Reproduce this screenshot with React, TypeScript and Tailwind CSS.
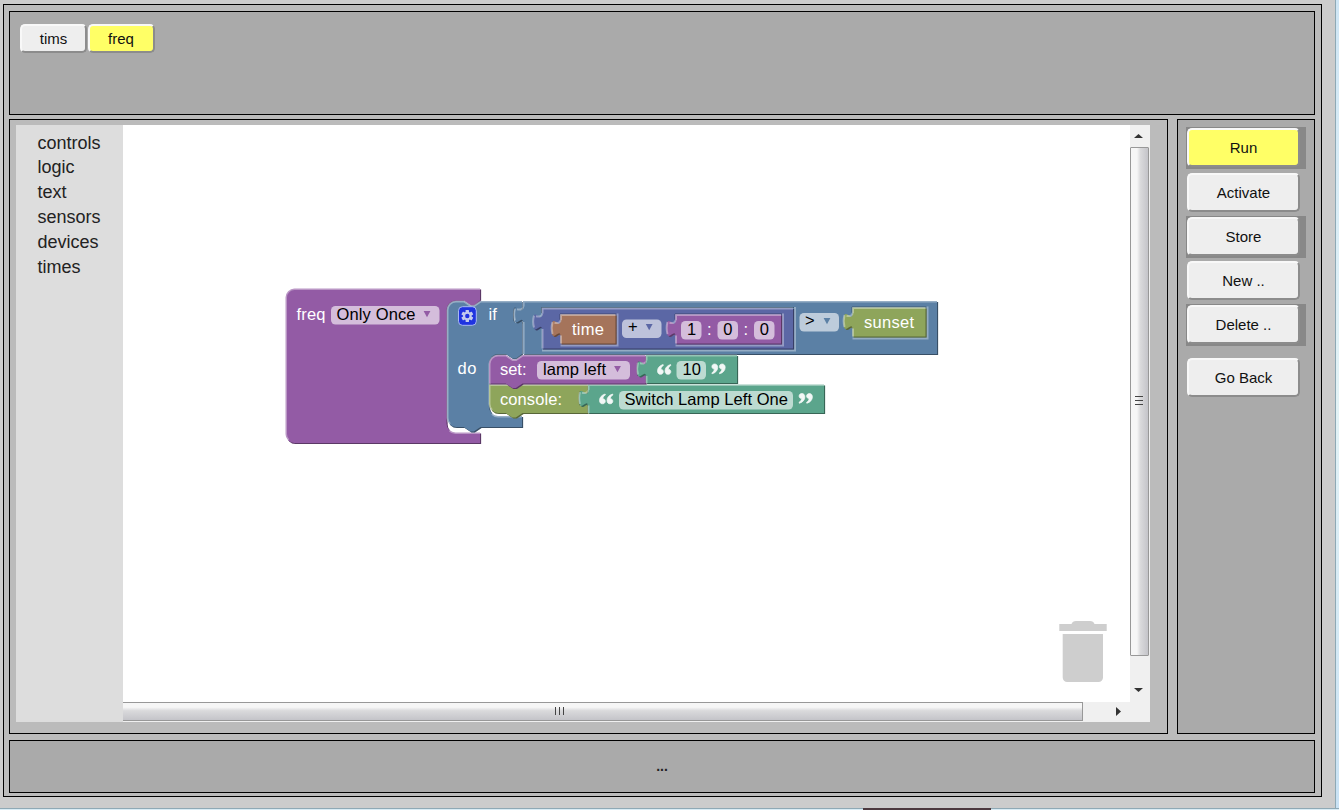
import React from "react";

const PURPLE = "#935ba5";
const BLUE = "#5b80a5";
const INDIGO = "#5b67a5";
const BROWN = "#a5745b";
const OLIVE = "#8ea55b";
const TEAL = "#5ba58c";

const CATEGORIES = ["controls", "logic", "text", "sensors", "devices", "times"];

/* ---------- blocks ---------- */

function Shape({ d, light, color }: { d: string; light: string; color: string }) {
  return (
    <g>
      <path d={d} transform="translate(1.1,1.1)" fill={color} />
      <path d={d} transform="translate(1.1,1.1)" fill="#000" fillOpacity={0.38} />
      <path d={d} fill={color} />
      <path d={light} fill="none" stroke="#fff" strokeOpacity={0.36} strokeWidth={2} />
    </g>
  );
}

/* Output block with a puzzle tab on its left side. */
function ValueBlock({
  x, y, w, h, color, inset = false,
}: { x: number; y: number; w: number; h: number; color: string; inset?: boolean }) {
  const d = `M0,0 H${w} V${h} H0 V22.4 c0,-11.2 -9,9 -9,-8.4 s9,2.8 9,-8.4 Z`;
  const light = `M${w},0.5 H0.5 V5.6 M0.5,${h} V21 M-8,19.6 q-1.7,-6.2 0,-12 M-6,8.2 q5.5,1.4 6.2,-2.6`;
  return (
    <g transform={`translate(${x},${y})`}>
      {inset && (
        <path
          d={`M${w + 2},-1 V${h + 2} H0 M-7,20.8 l6,-1.2`}
          fill="none" stroke="#fff" strokeOpacity={0.35} strokeWidth={2}
        />
      )}
      {inset && (
        <path d={`M${w + 1},-0.5 H-0.5 V5`} fill="none" stroke="#000" strokeOpacity={0.3} />
      )}
      <Shape d={d} light={light} color={color} />
    </g>
  );
}

function Label({ x, y, w, children, fill = "#fff" }: { x: number; y: number; w?: number; children: string; fill?: string }) {
  return (
    <text x={x} y={y} fill={fill} textLength={w} fontSize={16.5}>
      {children}
    </text>
  );
}

function Field({ x, y, w, h = 18.5 }: { x: number; y: number; w: number; h?: number }) {
  return <rect x={x} y={y} width={w} height={h} rx={4.5} fill="#fff" fillOpacity={0.6} />;
}

function Arrow({ x, y, color }: { x: number; y: number; color: string }) {
  return <path d={`M${x - 0.2},${y} h6.8 l-3.4,6.2 z`} fill={color} />;
}

const QUOTE =
  "M5.6,0 C2.2,1 0,3.4 0,6.4 C0,8.6 1.3,9.8 3,9.8 C4.7,9.8 5.8,8.7 5.8,7.2 C5.8,5.7 4.7,4.7 3.3,4.7 C3.4,3.2 4.3,1.8 5.9,0.9 Z";

function Quote({ x, y, close = false }: { x: number; y: number; close?: boolean }) {
  return (
    <g
      transform={close ? `translate(${x + 13.4},${y + 9.8}) rotate(180)` : `translate(${x},${y})`}
      fill="#fff" stroke="#fff" strokeWidth={0.7} strokeLinejoin="round" opacity={0.92}
    >
      <path d={QUOTE} />
      <path d={QUOTE} transform="translate(7.5,0)" />
    </g>
  );
}

function Gear() {
  return (
    <g transform="translate(467.3,316)">
      <rect x={-8.8} y={-9.3} width={17.8} height={18.6} rx={4} fill="#1f33e0" stroke="#a9b9f2" strokeWidth={1} />
      {[0, 60, 120].map((a) => (
        <rect key={a} x={-1.7} y={-6} width={3.4} height={12} rx={0.6} fill="#c3cbee" transform={`rotate(${a})`} />
      ))}
      <circle r={4.3} fill="#c3cbee" />
      <circle r={2.2} fill="#1f33e0" />
    </g>
  );
}

function Workspace() {
  return (
    <svg
      className="block h-[577px] w-[1007px] bg-white"
      viewBox="123 125 1007 577"
      fontFamily="'Liberation Sans', Arial, sans-serif"
    >
      {/* freq */}
      <Shape
        color={PURPLE}
        d="M285.5,297.5 A9,9 0 0 1 294.5,288.5 H480 V300.5 l-6,4.5 h-3.4 l-6.7,-4.5 H455.5 a9,9 0 0 0 -9,9 V423.5 a9,9 0 0 0 9,9 H480 V443 H294.5 A9,9 0 0 1 285.5,434 Z"
        light="M288.5,440 A9,9 0 0 1 286,434 V297.5 A8.5,8.5 0 0 1 294.5,289 H480 M449.5,430.5 a9,9 0 0 0 6,2.5 H480"
      />
      <Label x={296.5} y={320} w={29}>freq</Label>
      <Field x={331} y={306} w={108.5} />
      <Label x={336.5} y={320} w={79} fill="#000">Only Once</Label>
      <Arrow x={423.8} y={311} color={PURPLE} />

      {/* if / do */}
      <Shape
        color={BLUE}
        d="M447,310 A9,9 0 0 1 456,301 H464 l6.7,4.5 h3.4 l6.7,-4.5 H522 V306.6 c0,11.2 -9,-9 -9,8.4 s9,-2.8 9,8.4 V354 l-6,4.5 h-3.4 l-6.7,-4.5 H498 a9,9 0 0 0 -9,9 V407 a9,9 0 0 0 9,9 H522 V427 H480.5 l-6.7,4.5 h-3.4 l-6.7,-4.5 H456 A9,9 0 0 1 447,418 Z"
        light="M450,424 A9,9 0 0 1 447.5,418 V310 A8.5,8.5 0 0 1 456,301.5 H464 l6.7,4.5 h3.4 l6.7,-4.5 H522 M492,414 a9,9 0 0 0 6,2.5 H522 M515.5,321.5 l6,-1.2"
      />
      <Gear />
      <Label x={488.5} y={320}>if</Label>
      <Label x={457.5} y={374} w={19}>do</Label>

      {/* comparison */}
      <ValueBlock x={523} y={301} w={414} h={53} color={BLUE} />
      <path d="M523.4,302 V306.5 M523.4,323.5 V354" stroke="#8ea8c2" strokeWidth={1.6} />
      <ValueBlock x={542} y={308} w={251} h={40.5} color={INDIGO} inset />
      <ValueBlock x={560.5} y={314.5} w={55} h={29} color={BROWN} inset />
      <Label x={572} y={335} w={32}>time</Label>
      <Field x={622} y={319.5} w={39.5} />
      <Label x={628} y={332} fill="#000">+</Label>
      <Arrow x={646} y={324} color={INDIGO} />
      <ValueBlock x={675.5} y={314.5} w={105.5} h={29} color={PURPLE} inset />
      <Field x={681} y={321} w={20.5} />
      <Label x={687} y={335} fill="#000">1</Label>
      <Label x={707} y={335}>:</Label>
      <Field x={717.5} y={321} w={20.5} />
      <Label x={723.2} y={335} fill="#000">0</Label>
      <Label x={743.5} y={335}>:</Label>
      <Field x={754} y={321} w={20.5} />
      <Label x={759.7} y={335} fill="#000">0</Label>
      <Field x={799.5} y={313} w={39.5} />
      <Label x={805} y={326} fill="#000">&gt;</Label>
      <Arrow x={823.8} y={318} color={BLUE} />
      <ValueBlock x={852.5} y={307.5} w={73} h={29} color={OLIVE} inset />
      <Label x={864} y={328} w={50}>sunset</Label>

      {/* console */}
      <Shape
        color={OLIVE}
        d="M489,384.5 H587.5 V390 c0,11.2 -9,-9 -9,8.4 s9,-2.8 9,8.4 V413 H522.5 l-6.7,4.5 h-3.4 l-6.7,-4.5 H498 A9,9 0 0 1 489,404 Z"
        light="M492,410 A9,9 0 0 1 489.5,404 V385 H587.5"
      />
      <Label x={500} y={405} w={62}>console:</Label>
      <ValueBlock x={588} y={384.5} w={236} h={28.5} color={TEAL} />
      <Quote x={599.5} y={394} />
      <Field x={619} y={391} w={174} />
      <Label x={624.5} y={405} w={163.5} fill="#000">Switch Lamp Left One</Label>
      <Quote x={799} y={393.5} close />

      {/* set */}
      <Shape
        color={PURPLE}
        d="M489,364 A9,9 0 0 1 498,355 H506 l6.7,4.5 h3.4 l6.7,-4.5 H645.5 V360.6 c0,11.2 -9,-9 -9,8.4 s9,-2.8 9,8.4 V383.5 H522.5 l-6.7,4.5 h-3.4 l-6.7,-4.5 H489 Z"
        light="M489.5,384 V364 A8.5,8.5 0 0 1 498,355.5 H506 l6.7,4.5 h3.4 l6.7,-4.5 H645.5"
      />
      <Label x={500} y={375} w={26.5}>set:</Label>
      <Field x={537} y={361} w={93} />
      <Label x={543} y={375} w={63} fill="#000">lamp left</Label>
      <Arrow x={614.3} y={366} color={PURPLE} />
      <ValueBlock x={646} y={355} w={91} h={28} color={TEAL} />
      <Quote x={657.5} y={364.5} />
      <Field x={676.5} y={361} w={29.5} />
      <Label x={682.5} y={375} fill="#000">10</Label>
      <Quote x={711.8} y={364} close />

      {/* trash */}
      <path
        fill="#cecece"
        d="M1059.3,624 H1071.5 Q1072.5,621 1076,621 H1090 Q1093.5,621 1094.5,624 H1106.7 V631 H1059.3 Z M1062.7,634 H1103 V677.5 A4.5,4.5 0 0 1 1098.5,682 H1067.2 A4.5,4.5 0 0 1 1062.7,677.5 Z"
      />
    </svg>
  );
}

/* ---------- scrollbars ---------- */

function VerticalScrollbar() {
  return (
    <div className="flex h-[577px] w-5 flex-col bg-[#f0f0f0]">
      <div className="flex h-[22px] items-center justify-center pr-[3px] pb-px">
        <svg className="h-1 w-[9px]" viewBox="0 0 9 4"><path d="M0,4 L4.5,0 L9,4 Z" fill="#333" /></svg>
      </div>
      <div className="flex h-[509px] w-[19px] items-center justify-center rounded-[1px] border border-[#989898] bg-linear-to-r from-[#f6f6f6] from-35% via-[#dadadc] via-55% to-[#c4c4c9] pr-0.5 pb-0.5">
        <div className="flex h-[9px] w-2 flex-col justify-between">
          <i className="h-px bg-[#444]" />
          <i className="h-px bg-[#444]" />
          <i className="h-px bg-[#444]" />
        </div>
      </div>
      <div className="flex grow items-center justify-center pt-[22px] pr-[3px]">
        <svg className="h-1 w-[9px]" viewBox="0 0 9 4"><path d="M0,0 L4.5,4 L9,0 Z" fill="#333" /></svg>
      </div>
    </div>
  );
}

function HorizontalScrollbar() {
  return (
    <div className="flex h-5 bg-[#f0f0f0]">
      <div className="flex h-[19px] w-[960px] items-center border border-l-0 border-[#989898] bg-linear-to-b from-[#f6f6f6] from-25% via-[#dadadc] via-45% to-[#c4c4c9] pb-px pl-[432px]">
        <div className="flex h-2 w-[9px] justify-between">
          <i className="w-px bg-[#444]" />
          <i className="w-px bg-[#444]" />
          <i className="w-px bg-[#444]" />
        </div>
      </div>
      <div className="flex grow items-center pb-0.5 pl-[33px]">
        <svg className="h-[9px] w-[5px]" viewBox="0 0 5 9"><path d="M0,0 L5,4.5 L0,9 Z" fill="#333" /></svg>
      </div>
    </div>
  );
}

/* ---------- buttons ---------- */

const RAISED =
  "rounded-[5px] border-2 border-t-[#f8f8f8] border-l-[#f8f8f8] border-r-[#8c8c8c] border-b-[#8c8c8c] text-[15px] leading-none text-[#111]";

function Tab({ label, active = false }: { label: string; active?: boolean }) {
  return (
    <button className={`${RAISED} h-[29px] w-[67px] ${active ? "bg-[#ffff66]" : "bg-[#eeeeee]"}`}>{label}</button>
  );
}

function SideButton({ label, active = false, shaded = false }: { label: string; active?: boolean; shaded?: boolean }) {
  return (
    <div className={`h-[42px] w-[120px] pt-[1.3px] pl-px ${shaded ? "bg-[#888888]" : ""}`}>
      <button className={`${RAISED} block h-[39px] w-[113px] ${active ? "bg-[#ffff66]" : "bg-[#eeeeee]"}`}>{label}</button>
    </div>
  );
}

export default function App() {
  return (
    <div className="flex h-[810px] w-[1339px] flex-col overflow-hidden bg-[#d9ecf5] font-['Liberation_Sans',Arial,sans-serif]">
      <div className="flex h-[808px]">
        <div className="h-[808px] w-[1336px] border-r border-[#8fa9b5] bg-[#cccccc] pt-1 pl-[3px]">
          <div className="flex h-[793px] w-[1319px] flex-col border border-black bg-[#bbbbbb] pt-1.5 pl-[5px]">
            <header className="flex h-[104px] w-[1306px] gap-[0.5px] border border-black bg-[#aaaaaa] pt-3 pl-[10px]">
              <Tab label="tims" />
              <Tab label="freq" active />
            </header>

            <div className="mt-1 flex h-[615px] gap-[9px]">
              <main className="flex w-[1159px] border border-black pt-[5px] pl-1.5">
                <nav className="h-[597px] w-[107px] bg-[#dddddd] pt-[5.7px] pl-[21.5px] text-[18px] leading-[24.8px] text-[#222]">
                  {CATEGORIES.map((name) => (
                    <div key={name}>{name}</div>
                  ))}
                </nav>
                <div className="flex h-[597px] w-[1027px] flex-col">
                  <div className="flex">
                    <Workspace />
                    <VerticalScrollbar />
                  </div>
                  <HorizontalScrollbar />
                </div>
              </main>

              <aside className="flex w-[138px] flex-col gap-[2.25px] border border-black bg-[#aaaaaa] pt-[7px] pl-2">
                <SideButton label="Run" active shaded />
                <SideButton label="Activate" />
                <SideButton label="Store" shaded />
                <SideButton label="New .." />
                <SideButton label="Delete .." shaded />
                <div className="mt-[8.5px]">
                  <SideButton label="Go Back" />
                </div>
              </aside>
            </div>

            <footer className="mt-1.5 flex h-[53px] w-[1306px] items-center justify-center border border-black bg-[#aaaaaa] text-[14px] font-bold text-[#222]">
              ...
            </footer>
          </div>
        </div>
        <div className="grow bg-linear-to-b from-[#cfe6f5] via-[#e3f3f6] to-[#c9e2f4]" />
      </div>
      <div className="flex h-0.5 border-t border-[#8fa9b5] pl-[863px]">
        <div className="-mt-px h-0.5 w-[128px] bg-[#4d3a40]" />
      </div>
    </div>
  );
}
